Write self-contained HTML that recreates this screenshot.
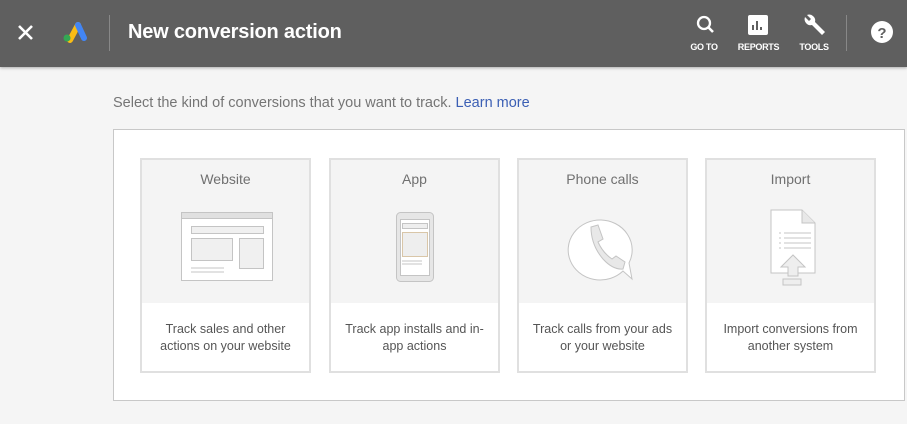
<!DOCTYPE html>
<html><head><style>
*{margin:0;padding:0;box-sizing:border-box}
body{width:907px;height:424px;overflow:hidden;background:#f5f5f5;font-family:"Liberation Sans",Arial,sans-serif;position:relative}
.hdr{position:absolute;left:0;top:0;width:907px;height:67px;background:#5f5f5f;box-shadow:0 1px 3px rgba(0,0,0,.3)}
.title{position:absolute;left:128px;top:21px;color:#fff;font-size:20px;font-weight:bold;letter-spacing:-0.2px}
.sep{position:absolute;top:15px;width:1px;height:36px;background:#888}
.lbl{position:absolute;top:42px;color:#fff;font-size:9px;font-weight:bold;text-align:center;letter-spacing:-0.3px}
.intro{position:absolute;left:113px;top:95px;font-size:14.5px;color:#757575}
.intro span{color:#3b5fb4}
.box{position:absolute;left:113px;top:129px;width:792px;height:272px;background:#fff;border:1px solid #c8c8c8}
.card{position:absolute;top:158px;width:171px;height:215px;border:2px solid #e0e0e0;background:#fff}
.card .top{position:absolute;left:0;top:0;right:0;height:143px;background:#f4f4f4}
.card .h{position:absolute;top:11px;left:0;right:0;text-align:center;font-size:14px;color:#707070}
.card .d{position:absolute;top:161px;left:4px;right:4px;text-align:center;font-size:12.5px;line-height:17px;color:#555}
.card svg{position:absolute;left:0;top:0}
</style></head><body>
<div class="hdr">
<svg width="907" height="67" style="position:absolute;left:0;top:0">
<path d="M19 26 L32 39 M32 26 L19 39" stroke="#fff" stroke-width="2.6"/>
<path d="M70 40 L78 25" stroke="#f9bc15" stroke-width="6" stroke-linecap="round"/>
<path d="M78 25 L84 38" stroke="#4285f4" stroke-width="6" stroke-linecap="round"/>
<circle cx="67" cy="38" r="3.5" fill="#34a853"/>
<circle cx="704" cy="23" r="6" fill="none" stroke="#fff" stroke-width="2.3"/>
<path d="M708 27 L713 32" stroke="#fff" stroke-width="2.6"/>
<rect x="748" y="15" width="20" height="20" rx="2" fill="#fff"/>
<path d="M753 30v-5M757 30v-9M761 30v-3" stroke="#5f5f5f" stroke-width="2"/>
<path d="M805 17 a6 6 0 0 0 7 8 l10 10 l3 -3 l-10 -10 a6 6 0 0 0 -8 -7 l4 4 l-2 2 z" fill="#fff"/>
<circle cx="882" cy="32" r="11" fill="#fff"/>
<text x="882" y="38" text-anchor="middle" font-family="Liberation Sans" font-weight="bold" font-size="15" fill="#5f5f5f">?</text>
</svg>
<div class="sep" style="left:109px"></div>
<div class="sep" style="left:846px"></div>
<div class="title">New conversion action</div>
<div class="lbl" style="left:688px;width:32px">GO TO</div>
<div class="lbl" style="left:736px;width:45px">REPORTS</div>
<div class="lbl" style="left:798px;width:32px">TOOLS</div>
</div>
<div class="intro">Select the kind of conversions that you want to track. <span>Learn more</span></div>
<div class="box"></div>

<div class="card" style="left:140px"><div class="top"></div><div class="h">Website</div>
<svg width="171" height="143"><g fill="none" stroke="#c4c4c4">
<rect x="39.5" y="52.5" width="91" height="68" fill="#fff"/><rect x="39.5" y="52.5" width="91" height="6" fill="#e0e0e0"/>
<rect x="49.5" y="66.5" width="72" height="7" fill="#f0f0f0"/><rect x="49.5" y="78.5" width="41" height="22" fill="#f0f0f0"/>
<rect x="97.5" y="78.5" width="24" height="30" fill="#f0f0f0"/><path d="M49 108h33M49 112h33"/></g></svg>
<div class="d">Track sales and other actions on your website</div></div>

<div class="card" style="left:329px"><div class="top"></div><div class="h">App</div>
<svg width="171" height="143"><g fill="none" stroke="#c4c4c4">
<rect x="65.5" y="52.5" width="37" height="69" rx="4" fill="#e6e6e6"/><rect x="69.5" y="59.5" width="29" height="56" fill="#fff"/>
<rect x="71.5" y="63.5" width="25" height="5" fill="#eee"/><rect x="71.5" y="72.5" width="25" height="24" fill="#eee" stroke="#d9c6a8"/>
<path d="M71 101h20M71 104h20"/></g></svg>
<div class="d">Track app installs and in-app actions</div></div>

<div class="card" style="left:517px"><div class="top"></div><div class="h">Phone calls</div>
<svg width="171" height="143"><g stroke="#c4c4c4" fill="#fff">
<path d="M113 119 L104 111 A32 30 0 1 1 110 103 Z"/>
<path d="M72 67 l7 -2 l5 14 l-5 3 q5 11 14 17 l4 -3 l9 6 l-2 7 q-10 1 -20 -10 q-12 -14 -12 -32z" fill="#e8e8e8"/></g></svg>
<div class="d" style="left:10px;right:10px">Track calls from your ads or your website</div></div>

<div class="card" style="left:705px"><div class="top"></div><div class="h">Import</div>
<svg width="171" height="143"><g stroke="#c4c4c4" fill="none">
<path d="M64 50 h31 l13 13 v50 h-44z" fill="#fff"/><path d="M95 50 v13 h13" fill="#e8e8e8"/>
<path d="M72 73h2M77 73h27M72 78h2M77 78h27M72 83h2M77 83h27M72 88h2M77 88h27"/>
<path d="M74 107 L86 95 L98 107 H91 V116 H81 V107 Z" fill="#eee"/>
<rect x="76" y="119" width="18" height="6" fill="#eee"/></g></svg>
<div class="d">Import conversions from another system</div></div>
</body></html>
